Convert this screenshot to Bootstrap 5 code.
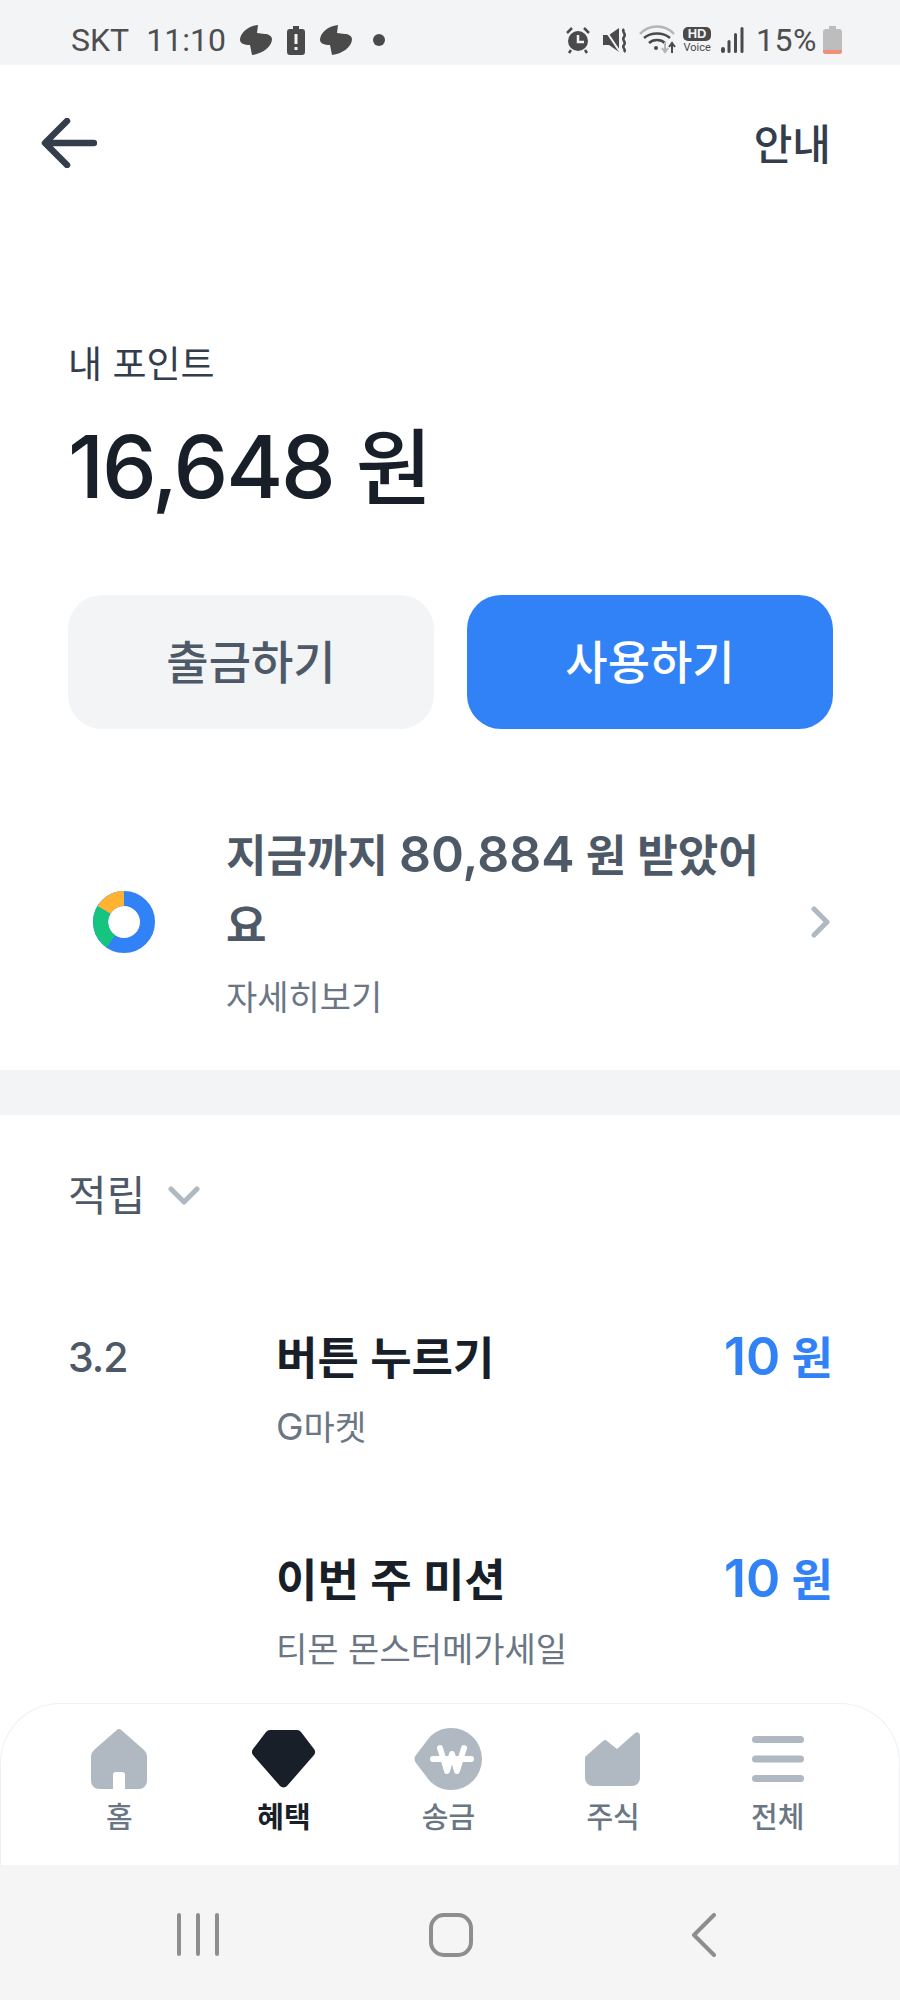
<!DOCTYPE html>
<html lang="ko">
<head>
<meta charset="utf-8">
<title>내 포인트</title>
<link rel="stylesheet" href="https://cdn.jsdelivr.net/npm/bootstrap@5.3.0/dist/css/bootstrap.min.css">
<style>
html,body{margin:0;background:#fff;}
body{font-family:Inter,"Noto Sans CJK KR","Noto Sans",sans-serif;}
.app-page{width:900px;height:2000px;overflow:hidden;}
.status-strip{height:65px;flex:none;background:#f2f4f6;padding:15px 58px 0 71px;color:#4e4e4e;font-family:Roboto,"Liberation Sans",sans-serif;font-size:32px;line-height:50px;}
.status-strip svg{display:block;flex:none;fill:#4a4a4a;}
.time-text{margin-left:17px;margin-right:14px;}
.st-gap-14{margin-left:14px;}
.st-gap-21{margin-left:21px;}
.st-mute{margin-left:12px;}
.st-wifi{margin-left:10px;}
.st-hd{margin-left:6px;width:28px;color:#4a4a4a;}
.hd-pill{background:#4a4a4a;color:#f2f4f6;border-radius:5px;width:28px;height:14px;font:700 13px/14px "Liberation Sans",sans-serif;text-align:center;}
.hd-voice{font:400 11px/12px Roboto,sans-serif;margin-top:1px;white-space:nowrap;}
.st-signal{margin-left:10px;}
.st-pct{margin-left:12px;letter-spacing:.5px;}
.st-batt{margin-left:6px;}
.top-strip{height:156px;flex:none;padding:0 69px 0 41px;}
.help-text{font-size:42px;font-weight:500;color:#333d4b;line-height:60px;padding-top:3px;}
.body-scroll{min-height:0;overflow:hidden;}
.points-block{padding:119px 67px 0 68px;}
.points-label{font-size:37px;line-height:50px;color:#333d4b;}
.points-value{font-size:83px;line-height:100px;font-weight:500;color:#191f28;margin-top:27px;}
.points-num{font-size:87px;letter-spacing:-2.200px;}
.action-row{margin-top:77px;gap:33px;}
.action-btn{flex:1 1 0;height:134px;border:0;border-radius:34px;font-size:46px;font-weight:500;line-height:1;}
.action-btn.gray-action{background:#f2f4f6;color:#4e5968;}
.action-btn.gray-action:hover{background:#f2f4f6;color:#4e5968;}
.action-btn.blue-action{background:#3182f6;color:#fff;}
.action-btn.blue-action:hover{background:#3182f6;color:#fff;}
.total-row{padding:92px 69px 47px 93px;}
.donut-box{flex:none;width:62px;height:62px;margin-right:71px;}
.total-title{font-size:44px;line-height:70px;font-weight:600;color:#4e5968;width:540px;}
.total-num{font-size:50px;line-height:1;}
.total-sub{font-size:34px;line-height:50px;color:#6b7684;margin-top:12px;}
.gray-band{height:45px;background:#f2f4f6;}
.filter-row{padding:51px 0 0 68px;gap:23px;font-size:42px;line-height:60px;color:#4e5968;}
.reward-list{padding:103px 67px 0 68px;}
.reward-date{flex:none;width:208px;font-size:41px;line-height:56px;font-weight:500;letter-spacing:-1px;color:#4e5968;}
.reward-item+.reward-item{margin-top:98px;}
.reward-name{font-size:45px;line-height:60px;font-weight:600;color:#191f28;}
.reward-shop{font-size:34px;line-height:50px;color:#6b7684;margin-top:14px;}
.shop-latin{font-size:37px;line-height:1;}
.reward-amount{margin-left:auto;font-size:45px;line-height:60px;font-weight:600;color:#3182f6;}
.amount-num{font-size:52px;line-height:1;}
.tab-strip{height:162px;flex:none;padding:24px 39px 0 36px;background:#fff;border:1px solid #eef0f2;border-bottom:0;border-radius:60px 60px 0 0;}
.tab-cell{flex:1 1 0;color:#6b7684;font-size:29px;line-height:40px;font-weight:500;text-align:center;}
.tab-cell.active-tab{color:#191f28;font-weight:700;}
.tab-icon{height:62px;margin-bottom:8px;}
.soft-bar{height:135px;flex:none;background:#f5f5f5;padding:48px 0 0 177px;}
.soft-key{flex:none;}
.soft-home{margin-left:210px;}
.soft-back{margin-left:218px;}
</style>
</head>
<body>
<div class="app-page d-flex flex-column">

  <div class="status-strip d-flex align-items-center">
    <span>SKT</span><span class="time-text">11:10</span>
    <svg width="32" height="30" viewBox="0 0 32 30"><path d="M18 0C8 1 0 8 0 15c0 3 4 5 10 5l2 10c10-1 20-8 20-16 0-3-4-5-7-5l-8-1z"/></svg>
    <svg class="st-gap-14" width="20" height="30" viewBox="0 0 20 30"><path d="M7 1h6v3h3a3 3 0 0 1 3 3v20a3 3 0 0 1-3 3H4a3 3 0 0 1-3-3V7a3 3 0 0 1 3-3h3z"/><rect x="8.500" y="9" width="3" height="10" fill="#f2f4f6"/><rect x="8.500" y="22" width="3" height="3" fill="#f2f4f6"/></svg>
    <svg class="st-gap-14" width="32" height="30" viewBox="0 0 32 30"><path d="M18 0C8 1 0 8 0 15c0 3 4 5 10 5l2 10c10-1 20-8 20-16 0-3-4-5-7-5l-8-1z"/></svg>
    <svg class="st-gap-21" width="12" height="12" viewBox="0 0 12 12"><circle cx="6" cy="6" r="6"/></svg>
    <div class="ms-auto d-flex align-items-center">
      <svg width="26" height="28" viewBox="0 0 26 28"><circle cx="13" cy="15" r="10"/><path d="M2 7l5-5M24 7l-5-5M6 24l-2 3M20 24l2 3" stroke="#4a4a4a" stroke-width="2.500" fill="none"/><path d="M13 9v7h6" stroke="#f2f4f6" stroke-width="2.500" fill="none"/></svg>
      <svg class="st-mute" width="26" height="26" viewBox="0 0 26 26"><path d="M0 8h6l10-7v24L6 18H0z"/><path d="M1 1l16 24" stroke="#f2f4f6" stroke-width="2" fill="none"/><path d="M21 2c-3 3 3 5 0 8s3 5 0 8 3 4 0 7" stroke="#4a4a4a" stroke-width="2.500" fill="none"/></svg>
      <svg class="st-wifi" width="38" height="30" viewBox="0 0 38 30"><path d="M1 9c9-10 25-10 34 0" stroke="#b5b5b5" stroke-width="2.500" fill="none"/><path d="M5 13c7-6 19-6 26 0M10 18c4-4 12-4 16 0" stroke="#4a4a4a" stroke-width="2.500" fill="none"/><circle cx="17" cy="23" r="2"/><path d="M26 17v9M23 23l3 4 3-4" stroke="#b5b5b5" stroke-width="2" fill="none"/><path d="M33 28v-9M30 22l3-4 3 4" stroke="#4a4a4a" stroke-width="2" fill="none"/></svg>
      <div class="st-hd d-flex flex-column align-items-center">
        <div class="hd-pill">HD</div>
        <div class="hd-voice">Voice</div>
      </div>
      <svg class="st-signal" width="23" height="28" viewBox="0 0 23 28"><rect x="0" y="21" width="4" height="6" rx="2"/><rect x="6.500" y="14" width="3" height="13" rx="1.500"/><rect x="13" y="7" width="3" height="20" rx="1.500"/><rect x="19.500" y="1" width="3" height="26" rx="1.500"/></svg>
      <span class="st-pct">15%</span>
      <svg class="st-batt" width="19" height="28" viewBox="0 0 19 28"><path d="M6 0h7v3h3a3 3 0 0 1 3 3v19a3 3 0 0 1-3 3H3a3 3 0 0 1-3-3V6a3 3 0 0 1 3-3h3z" fill="#bdbdbd"/><path d="M0 24h19v1a3 3 0 0 1-3 3H3a3 3 0 0 1-3-3z" fill="#ef8f78"/></svg>
    </div>
  </div>

  <div class="top-strip d-flex align-items-center justify-content-between">
    <svg width="56" height="50" viewBox="0 0 56 50"><path d="M26 3L4 25l22 22M5 25h48" stroke="#333d4b" stroke-width="6.500" stroke-linecap="round" stroke-linejoin="round" fill="none"/></svg>
    <span class="help-text">안내</span>
  </div>

  <div class="body-scroll flex-grow-1">
    <div class="points-block">
      <div class="points-label">내 포인트</div>
      <div class="points-value"><span class="points-num">16,648</span> 원</div>
      <div class="action-row d-flex">
        <button type="button" class="btn action-btn gray-action">출금하기</button>
        <button type="button" class="btn action-btn blue-action">사용하기</button>
      </div>
    </div>

    <div class="total-row d-flex align-items-center">
      <svg class="donut-box" viewBox="0 0 62 62">
        <circle cx="31" cy="31" r="23.500" fill="none" stroke="#3182f6" stroke-width="15"/>
        <path d="M31 7.500A23.500 23.500 0 0 0 11 19" fill="none" stroke="#ffb331" stroke-width="15"/>
        <path d="M11 19A23.500 23.500 0 0 0 18 50.500" fill="none" stroke="#15c47e" stroke-width="15"/>
      </svg>
      <div>
        <div class="total-title">지금까지 <span class="total-num">80,884</span> 원 받았어<br>요</div>
        <div class="total-sub">자세히보기</div>
      </div>
      <svg class="ms-auto" width="20" height="32" viewBox="0 0 20 32"><path d="M3 3l13 13L3 29" stroke="#b0b8c1" stroke-width="5" stroke-linecap="round" stroke-linejoin="round" fill="none"/></svg>
    </div>

    <div class="gray-band"></div>

    <div class="filter-row d-flex align-items-center">
      <span>적립</span>
      <svg width="32" height="20" viewBox="0 0 32 20"><path d="M3 3l13 13L29 3" stroke="#b0b8c1" stroke-width="5" stroke-linecap="round" stroke-linejoin="round" fill="none"/></svg>
    </div>

    <div class="reward-list">
      <div class="reward-item d-flex">
        <div class="reward-date">3.2</div>
        <div>
          <div class="reward-name">버튼 누르기</div>
          <div class="reward-shop"><span class="shop-latin">G</span>마켓</div>
        </div>
        <div class="reward-amount"><span class="amount-num">10</span> 원</div>
      </div>
      <div class="reward-item d-flex">
        <div class="reward-date"></div>
        <div>
          <div class="reward-name">이번 주 미션</div>
          <div class="reward-shop">티몬 몬스터메가세일</div>
        </div>
        <div class="reward-amount"><span class="amount-num">10</span> 원</div>
      </div>
    </div>
  </div>

  <div class="tab-strip d-flex">
    <div class="tab-cell">
      <div class="tab-icon d-flex justify-content-center align-items-center">
        <svg width="56" height="60" viewBox="0 0 56 60"><path fill="#b0b8c1" d="M25.500 1.200a3.500 3.500 0 0 1 5 0L53 21a9 9 0 0 1 3 6.500V52a8 8 0 0 1-8 8H34V46a3 3 0 0 0-3-3h-6a3 3 0 0 0-3 3v14H8a8 8 0 0 1-8-8V27.500A9 9 0 0 1 3 21z"/></svg>
      </div>
      <div>홈</div>
    </div>
    <div class="tab-cell active-tab">
      <div class="tab-icon d-flex justify-content-center align-items-center">
        <svg width="63" height="58" viewBox="0 0 63 58"><path fill="#191f28" d="M18 0h27a5 5 0 0 1 4 2l13 17a5 5 0 0 1 0 6L35 56a5 5 0 0 1-7 0L1 25a5 5 0 0 1 0-6L14 2a5 5 0 0 1 4-2z"/></svg>
      </div>
      <div>혜택</div>
    </div>
    <div class="tab-cell">
      <div class="tab-icon d-flex justify-content-center align-items-center">
        <svg width="68" height="62" viewBox="0 0 68 62"><path fill="#b0b8c1" d="M37 0a31 31 0 1 1 0 62c-9 0-17-4-22-10L2 35a6 6 0 0 1 0-8L15 10C20 4 28 0 37 0z"/><path d="M26 20l7 23 5-17 5 17 7-23M19 31h38" stroke="#fff" stroke-width="6" stroke-linecap="round" stroke-linejoin="round" fill="none"/></svg>
      </div>
      <div>송금</div>
    </div>
    <div class="tab-cell">
      <div class="tab-icon d-flex justify-content-center align-items-center">
        <svg width="56" height="54" viewBox="0 0 56 54"><path fill="#b0b8c1" d="M0 27a4 4 0 0 1 1-3L18 9a3 3 0 0 1 4 0l10 8L50 1c2-1.500 5-.5 5 3v42a8 8 0 0 1-8 8H8a8 8 0 0 1-8-8z"/></svg>
      </div>
      <div>주식</div>
    </div>
    <div class="tab-cell">
      <div class="tab-icon d-flex justify-content-center align-items-center">
        <svg width="52" height="46" viewBox="0 0 52 46"><rect width="52" height="7" y="0" rx="3.500" fill="#b0b8c1"/><rect width="52" height="7" y="19.500" rx="3.500" fill="#b0b8c1"/><rect width="52" height="7" y="39" rx="3.500" fill="#b0b8c1"/></svg>
      </div>
      <div>전체</div>
    </div>
  </div>

  <div class="soft-bar d-flex align-items-start">
    <svg class="soft-key" width="42" height="43" viewBox="0 0 42 43"><path d="M2 2v39M21 2v39M40 2v39" stroke="#8e8e8e" stroke-width="4" stroke-linecap="round" fill="none"/></svg>
    <svg class="soft-key soft-home" width="44" height="44" viewBox="0 0 44 44"><rect x="2" y="2" width="40" height="40" rx="13" stroke="#8e8e8e" stroke-width="4" fill="none"/></svg>
    <svg class="soft-key soft-back" width="26" height="44" viewBox="0 0 26 44"><path d="M23 2L3 22l20 20" stroke="#8e8e8e" stroke-width="4" stroke-linecap="round" stroke-linejoin="round" fill="none"/></svg>
  </div>
</div>
<script src="https://cdn.jsdelivr.net/npm/bootstrap@5.3.0/dist/js/bootstrap.bundle.min.js"></script>
</body>
</html>
